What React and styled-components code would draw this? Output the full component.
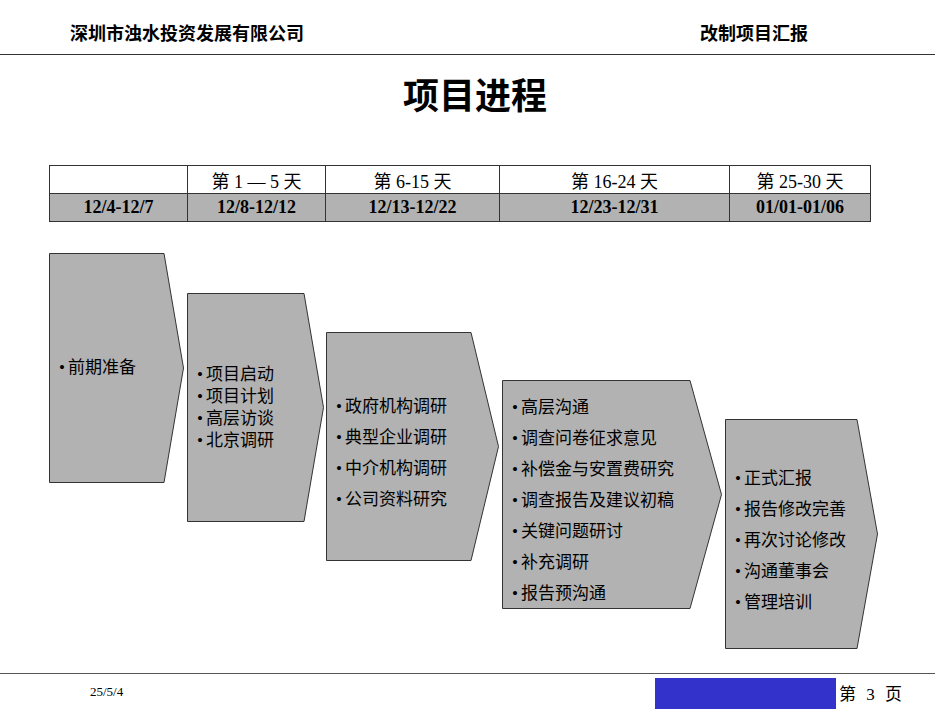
import React from 'react'
import styled, { createGlobalStyle } from 'styled-components'

const Global = createGlobalStyle`
  body { margin: 0; background: #fff; font-family: 'Liberation Serif', 'Noto Sans CJK SC', serif; }
`

const Page = styled.div`
  width: 950px;
  height: 713px;
  position: relative;
  overflow: hidden;
`

const Header = styled.div`
  display: flex;
  justify-content: space-between;
  padding: 19px 127px 0 70px;
  height: 35px;
  border-bottom: 1px solid #333;
  margin-right: 15px;
  font-family: 'Liberation Sans', 'Noto Sans CJK SC', sans-serif;
  font-weight: bold;
  font-size: 18px;
`

const Title = styled.h1`
  margin: 18px 0 0;
  text-align: center;
  font-family: 'Liberation Sans', 'Noto Sans CJK SC', sans-serif;
  font-size: 36px;
  font-weight: bold;
  line-height: 48px;
`

const Table = styled.div`
  position: absolute;
  left: 49px;
  top: 165px;
  display: grid;
  grid-template-columns: 138px 138px 174px 230px 141px;
  border-left: 1px solid #333;
`

const Cell = styled.div`
  height: 27px;
  display: flex;
  align-items: center;
  justify-content: center;
  border-right: 1px solid #333;
  border-top: 1px solid #333;
  border-bottom: ${(p) => (p.$dark ? '1px solid #333' : 'none')};
  background: ${(p) => (p.$dark ? '#b2b2b2' : '#fff')};
  font-size: 18px;
  font-weight: ${(p) => (p.$dark ? 'bold' : 'normal')};
`

const Node = styled.div`
  position: absolute;
  svg { position: absolute; inset: 0; }
`

const List = styled.div`
  position: absolute;
  left: 10px;
  right: 0;
  top: ${(p) => p.$top}px;
  font-size: 17px;
  line-height: ${(p) => p.$lh}px;
  z-index: 1;
  white-space: nowrap;
`

const Bullet = styled.span`
  margin-right: 3px;
`

const Footer = styled.div`
  position: absolute;
  left: 0;
  right: 15px;
  top: 673px;
  border-top: 1px solid #555;
  display: flex;
  align-items: center;
  height: 36px;
`

const DateText = styled.div`
  font-size: 13px;
  margin-left: 90px;
  flex: 1;
`

const BlueBar = styled.div`
  width: 181px;
  height: 31px;
  background: #3333cc;
  margin-top: 3px;
`

const PageNum = styled.div`
  width: 96px;
  font-size: 17px;
  padding-left: 3px;
  word-spacing: 6px;
`

const heads = ['', '第 1 — 5 天', '第 6-15 天', '第 16-24 天', '第 25-30 天']
const dates = ['12/4-12/7', '12/8-12/12', '12/13-12/22', '12/23-12/31', '01/01-01/06']

const nodes = [
  { x: 49, y: 253, w: 135, body: 115, h: 230, top: 104, lh: 22, items: ['前期准备'] },
  { x: 187, y: 293, w: 137, body: 117, h: 229, top: 71, lh: 22, items: ['项目启动', '项目计划', '高层访谈', '北京调研'] },
  { x: 326, y: 332, w: 173, body: 145, h: 229, top: 59, lh: 31, items: ['政府机构调研', '典型企业调研', '中介机构调研', '公司资料研究'] },
  { x: 502, y: 380, w: 220, body: 188, h: 229, top: 12, lh: 31, items: ['高层沟通', '调查问卷征求意见', '补偿金与安置费研究', '调查报告及建议初稿', '关键问题研讨', '补充调研', '报告预沟通'] },
  { x: 725, y: 419, w: 153, body: 132, h: 230, top: 44, lh: 31, items: ['正式汇报', '报告修改完善', '再次讨论修改', '沟通董事会', '管理培训'] },
]

export default function App() {
  return (
    <Page>
      <Global />
      <Header>
        <span>深圳市浊水投资发展有限公司</span>
        <span>改制项目汇报</span>
      </Header>
      <Title>项目进程</Title>
      <Table>
        {heads.map((h, i) => <Cell key={'h' + i}>{h}</Cell>)}
        {dates.map((d) => <Cell key={d} $dark>{d}</Cell>)}
      </Table>
      {nodes.map((n, i) => (
        <Node key={i} style={{ left: n.x, top: n.y, width: n.w, height: n.h }}>
          <svg width={n.w} height={n.h}>
            <polygon
              points={`0.5,0.5 ${n.body},0.5 ${n.w - 0.5},${n.h / 2} ${n.body},${n.h - 0.5} 0.5,${n.h - 0.5}`}
              fill="#b2b2b2"
              stroke="#333"
            />
          </svg>
          <List $top={n.top} $lh={n.lh}>
            {n.items.map((t) => <div key={t}><Bullet>•</Bullet>{t}</div>)}
          </List>
        </Node>
      ))}
      <Footer>
        <DateText>25/5/4</DateText>
        <BlueBar />
        <PageNum>第 3 页</PageNum>
      </Footer>
    </Page>
  )
}
